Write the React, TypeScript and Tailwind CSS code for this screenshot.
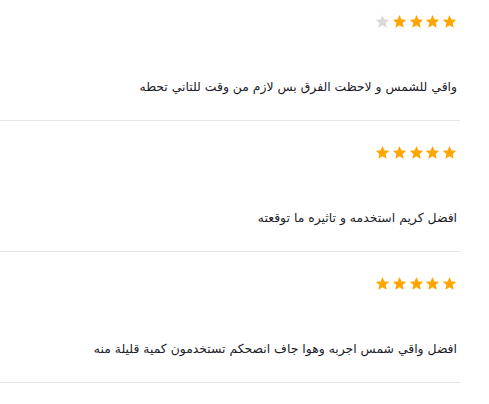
const REVIEWS = [
  { rating: 4, text: "واقي للشمس و لاحظت الفرق بس لازم من وقت للتاني تحطه" },
  { rating: 5, text: "افضل كريم استخدمه و تاثيره ما توقعته" },
  { rating: 5, text: "افضل واقي شمس اجربه وهوا جاف انصحكم تستخدمون كمية قليلة منه" },
];

function Star({ filled }: { filled: boolean }) {
  return (
    <svg viewBox="0 0 24 24" className="h-[15px] w-[15px]" fill={filled ? "#ffa500" : "#d9d9d9"}>
      <path d="M12 1.5l3.1 7.1 7.7.7-5.8 5.1 1.7 7.6L12 18l-6.7 4 1.7-7.6-5.8-5.1 7.7-.7z" />
    </svg>
  );
}

export default function App() {
  return (
    <div dir="rtl" className="w-[460px] bg-white font-['DejaVu_Sans',sans-serif] text-[#1c1c28]">
      {REVIEWS.map((r, i) => (
        <div
          key={i}
          className={`border-b border-[#e5e5e5] pb-[23px] pr-[3px] ${i === 0 ? "pt-[14px]" : "pt-[24px]"}`}
        >
          <div className="flex gap-[1.7px]">
            {[0, 1, 2, 3, 4].map((s) => (
              <Star key={s} filled={s < r.rating} />
            ))}
          </div>
          <p className="mt-[48px] text-[12.4px] leading-[20px]">{r.text}</p>
        </div>
      ))}
    </div>
  );
}
